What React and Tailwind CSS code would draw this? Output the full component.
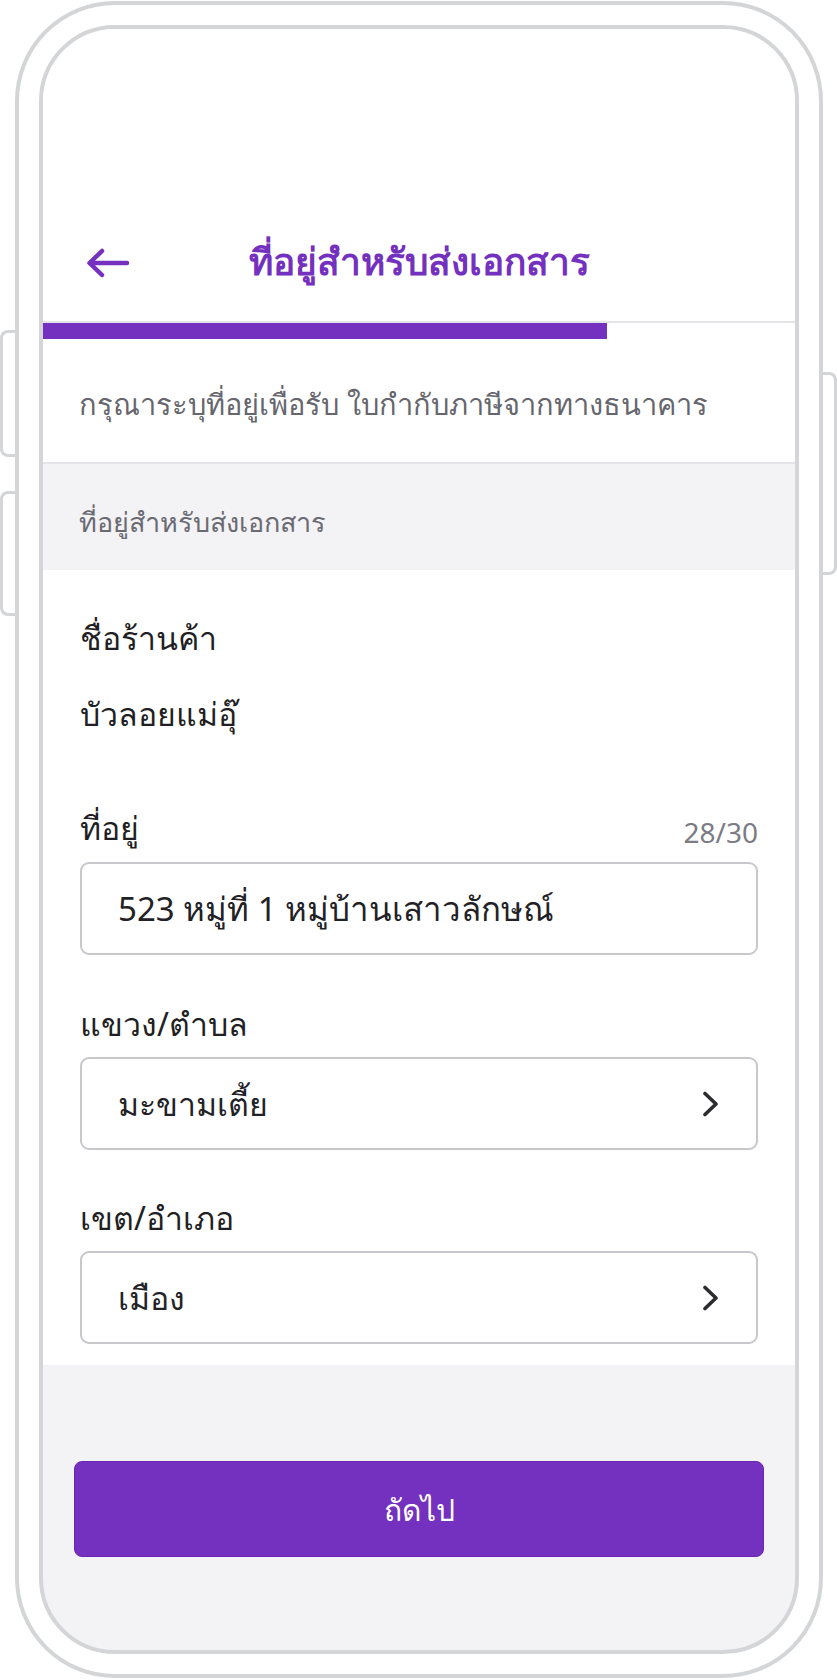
import React from "react";

const purple = "#7430be";

const BackArrow = () => (
    <svg width="44" height="30" viewBox="0 0 44 30" fill="none">
        <path d="M41 15H4M16 3L3.5 15L16 27" stroke={purple} strokeWidth="4.5" strokeLinecap="round" strokeLinejoin="round" />
    </svg>
);

const Chevron = () => (
    <svg width="17" height="26" viewBox="0 0 17 26" fill="none">
        <path d="M3 2.5L14 13L3 23.5" stroke="#2b2b30" strokeWidth="3.6" strokeLinecap="round" strokeLinejoin="round" />
    </svg>
);

const SelectBox = ({ value }) => (
    <div className="h-[93px] rounded-[9px] border-2 border-[#c8c8cc] flex items-center justify-between pl-[36px] pr-[37px]">
        <span className="text-[32px] text-[#222226]">{value}</span>
        <Chevron />
    </div>
);

export default function App() {
    return (
        <div className="w-[837px] h-[1680px] bg-white flex font-['Noto_Sans',sans-serif]">
            {/* left side buttons */}
            <div className="w-[15px] flex flex-col pt-[330px]">
                <div className="h-[127px] rounded-l-[8px] border-[3px] border-r-0 border-[#d3d5d7]" />
                <div className="h-[125px] mt-[34px] rounded-l-[8px] border-[3px] border-r-0 border-[#d3d5d7]" />
            </div>

            {/* phone frame */}
            <div className="w-[808px] h-[1677px] mt-[1px] border-4 border-[#d3d5d7] rounded-[100px] p-[20px] bg-white">
                <div className="h-full border-4 border-[#d3d5d7] rounded-[76px] overflow-hidden flex flex-col bg-[#f3f2f5]">
                    {/* header */}
                    <div className="h-[292px] bg-white flex flex-col justify-end pb-[20px]">
                        <div className="h-[80px] flex items-center px-[43px]">
                            <div className="w-[44px] pt-[4px]">
                                <BackArrow />
                            </div>
                            <h1 className="flex-1 text-center text-[37px] font-semibold text-[#7430be]">ที่อยู่สำหรับส่งเอกสาร</h1>
                            <div className="w-[44px]" />
                        </div>
                    </div>
                    <div className="h-[2px] bg-[#e4e4e8]" />
                    <div className="h-[16px] bg-white">
                        <div className="h-full w-3/4 bg-[#7430be]" />
                    </div>

                    {/* description */}
                    <div className="h-[123px] bg-white flex items-center pl-[36px] pt-[6px]">
                        <p className="text-[29px] text-[#66666e]">กรุณาระบุที่อยู่เพื่อรับ ใบกำกับภาษีจากทางธนาคาร</p>
                    </div>
                    <div className="h-[2px] bg-[#e6e6ea]" />

                    {/* section title */}
                    <div className="h-[106px] flex items-center pl-[36px] pt-[10px]">
                        <span className="text-[27px] text-[#6a6a72]">ที่อยู่สำหรับส่งเอกสาร</span>
                    </div>

                    {/* form */}
                    <div className="bg-white px-[37px] pt-[44px] pb-[21px] flex flex-col">
                        <div className="text-[32px] text-[#1f1f24] leading-[48px]">ชื่อร้านค้า</div>
                        <div className="text-[32px] text-[#1f1f24] leading-[48px] mt-[28px]">บัวลอยแม่อุ๊</div>

                        <div className="flex items-end justify-between mt-[66px] mb-[10px]">
                            <span className="text-[32px] text-[#1f1f24] leading-[48px]">ที่อยู่</span>
                            <span className="text-[28px] text-[#7c7c84] leading-[40px]">28/30</span>
                        </div>
                        <div className="h-[93px] rounded-[9px] border-2 border-[#c8c8cc] flex items-center pl-[36px]">
                            <span className="text-[33px] text-[#222226]">523 หมู่ที่ 1 หมู่บ้านเสาวลักษณ์</span>
                        </div>

                        <div className="text-[32px] text-[#1f1f24] leading-[48px] mt-[45px] mb-[9px]">แขวง/ตำบล</div>
                        <SelectBox value="มะขามเตี้ย" />

                        <div className="text-[32px] text-[#1f1f24] leading-[48px] mt-[44px] mb-[9px]">เขต/อำเภอ</div>
                        <SelectBox value="เมือง" />
                    </div>

                    {/* footer */}
                    <div className="flex-1 px-[31px] pt-[96px]">
                        <button className="w-full h-[96px] rounded-[8px] bg-[#7430be] border border-[#6a25b5] text-white text-[30px] font-medium">
                            ถัดไป
                        </button>
                    </div>
                </div>
            </div>

            {/* right side button */}
            <div className="w-[14px] flex flex-col pt-[372px]">
                <div className="h-[203px] rounded-r-[8px] border-[3px] border-l-0 border-[#d3d5d7]" />
            </div>
        </div>
    );
}
